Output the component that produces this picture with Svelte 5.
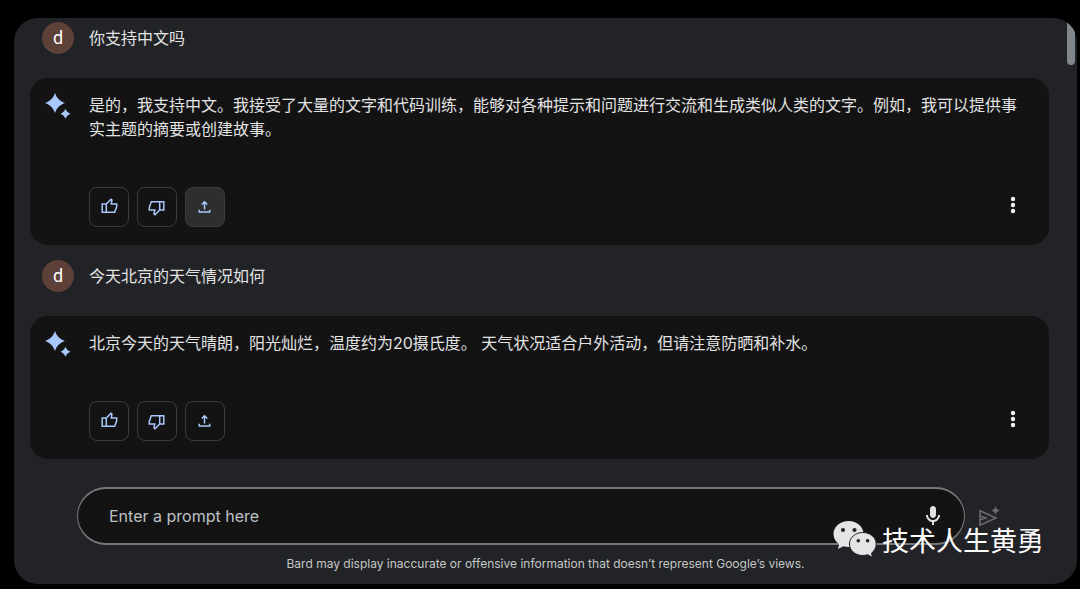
<script>
  const turns = [
    {
      prompt: '你支持中文吗',
      answer:
        '是的，我支持中文。我接受了大量的文字和代码训练，能够对各种提示和问题进行交流和生成类似人类的文字。例如，我可以提供事实主题的摘要或创建故事。',
      shareActive: true
    },
    {
      prompt: '今天北京的天气情况如何',
      answer: '北京今天的天气晴朗，阳光灿烂，温度约为20摄氏度。 天气状况适合户外活动，但请注意防晒和补水。',
      shareActive: false
    }
  ];
  let draft = $state('');
</script>

{#snippet thumb()}
  <path d="M3.200 7H7.300L12 2.200L13 3.100L12.200 7H17.700V9.600L15.700 15.200H3.200ZM7.300 7V15.200" />
{/snippet}

<main class="panel">
  <div class="scroll-thumb"></div>

  <section class="chat">
    {#each turns as turn}
      <div class="prompt">
        <span class="avatar">d</span>
        <p>{turn.prompt}</p>
      </div>
      <article class="card">
        <svg class="spark" viewBox="0 0 28 28" aria-hidden="true">
          <path d="M11 0C13.300 5.700 15.300 7.700 21 10C15.300 12.300 13.300 14.300 11 20C8.700 14.300 6.700 12.300 1 10C6.700 7.700 8.700 5.700 11 0Z" />
          <path d="M21.500 15.800C22.900 18.700 23.600 19.400 26.500 20.800C23.600 22.200 22.900 22.900 21.500 25.800C20.100 22.900 19.400 22.200 16.500 20.800C19.400 19.400 20.100 18.700 21.500 15.800Z" />
        </svg>
        <div class="body">
          <p>{turn.answer}</p>
          <div class="actions">
            <button class="action" aria-label="Good response">
              <svg viewBox="0 0 20 20">{@render thumb()}</svg>
            </button>
            <button class="action" aria-label="Bad response">
              <svg viewBox="0 0 20 20"><g transform="rotate(180 10 10)">{@render thumb()}</g></svg>
            </button>
            <button class="action" class:active={turn.shareActive} aria-label="Share">
              <svg viewBox="0 0 20 20">
                <path d="M9.500 12.500V5M6.700 7.500L9.500 4.700L12.300 7.500M4.300 12.800V14.900H14.700V12.800" />
              </svg>
            </button>
            <button class="more" aria-label="More options">
              <svg viewBox="0 0 20 20">
                <circle cx="10" cy="4" r="2.200" /><circle cx="10" cy="10" r="2.200" /><circle cx="10" cy="16" r="2.200" />
              </svg>
            </button>
          </div>
        </div>
      </article>
    {/each}
  </section>

  <footer>
    <form class="composer" onsubmit={(e) => e.preventDefault()}>
      <div class="field">
        <input type="text" placeholder="Enter a prompt here" aria-label="Enter a prompt here" bind:value={draft} />
        <button type="button" class="icon mic" aria-label="Use microphone">
          <svg viewBox="0 0 24 24">
            <path d="M12 14c1.660 0 3-1.340 3-3V5c0-1.660-1.340-3-3-3S9 3.340 9 5v6c0 1.660 1.340 3 3 3zM17 11c0 2.760-2.240 5-5 5s-5-2.240-5-5H5c0 3.530 2.610 6.430 6 6.920V21h2v-3.080c3.390-.49 6-3.390 6-6.920h-2z" />
          </svg>
        </button>
      </div>
      <button type="submit" class="icon send" aria-label="Submit">
        <svg viewBox="0 0 24 24">
          <path class="line" d="M3 6.800L19 14L3 21.200ZM3 12L9 14L3 16" />
          <path d="M18.500 2C19.500 5.100 19.900 5.500 23 6.500C19.900 7.500 19.500 7.900 18.500 11C17.500 7.900 17.100 7.500 14 6.500C17.100 5.500 17.500 5.100 18.500 2Z" />
        </svg>
      </button>
    </form>
    <p class="note">Bard may display inaccurate or offensive information that doesn’t represent Google’s views.</p>
  </footer>

  <div class="watermark">
    <svg viewBox="0 1 44 38" aria-hidden="true">
      <path class="bubble" d="M15.500 1C7.200 1 .5 6.800.5 14C.5 18.200 2.700 21.800 6.200 24.300L5 29L10.300 26.300C12 26.800 13.700 27 15.500 27C24 27 30.500 21.200 30.500 14S24 1 15.500 1Z" />
      <path class="bubble cut" d="M29.800 12.500C22.300 12.500 16.500 17.600 16.500 24S22.300 35.500 29.800 35.500C31.500 35.500 33.100 35.200 34.600 34.700L39.600 37.300L38.500 33.100C41.400 31 43.200 27.700 43.200 24C43.200 17.600 37.300 12.500 29.800 12.500Z" />
      <circle cx="10" cy="10" r="2.100" /><circle cx="21.500" cy="10" r="2.100" />
      <circle cx="25.300" cy="20.700" r="1.800" /><circle cx="34.600" cy="20.700" r="1.800" />
    </svg>
    <span>技术人生黄勇</span>
  </div>
</main>

<style>
  :global(body) {
    margin: 0;
    background: #000;
  }
  .panel {
    position: relative;
    overflow: hidden;
    margin: 18px 3px 5px 14px;
    border-radius: 24px;
    background: #222327;
    color: #e3e3e3;
    font: 16px/24px Inter, 'Noto Sans CJK SC', sans-serif;
  }
  p {
    margin: 0;
  }
  .scroll-thumb {
    position: absolute;
    top: 0;
    right: 2px;
    width: 8px;
    height: 47px;
    border-radius: 0 0 4px 4px;
    background: #80868b;
  }
  .chat {
    padding: 0 28px 0 16px;
  }
  .prompt {
    display: flex;
    align-items: center;
    gap: 15px;
    padding: 15px 12px 24px;
  }
  .prompt:first-child {
    padding-top: 4px;
  }
  .avatar {
    width: 32px;
    height: 32px;
    border-radius: 50%;
    background: #5d4037;
    color: #fff;
    font: 18px/32px Roboto, sans-serif;
    text-align: center;
  }
  .card {
    display: flex;
    gap: 17px;
    padding: 15px 24px 18px 14px;
    border-radius: 18px;
    background: #131313;
  }
  .spark {
    flex: none;
    width: 28px;
    height: 28px;
    fill: #a8c7fa;
  }
  .body {
    flex: 1;
    min-width: 0;
  }
  .actions {
    display: flex;
    gap: 8px;
    margin-top: 46px;
  }
  button {
    display: grid;
    place-items: center;
    padding: 0;
    border: 0;
    background: none;
    cursor: pointer;
  }
  .action {
    box-sizing: border-box;
    width: 40px;
    height: 40px;
    border: 1px solid #3a3b3c;
    border-radius: 8px;
  }
  .action.active {
    background: #2d2e2e;
  }
  .action svg {
    width: 20px;
    height: 20px;
    fill: none;
    stroke: #a8c7fa;
    stroke-width: 1.500;
  }
  .more {
    width: 24px;
    height: 36px;
    margin-left: auto;
  }
  .more svg {
    width: 20px;
    height: 20px;
    fill: #f1f1f1;
  }
  footer {
    padding: 28px 76px 11px 63px;
  }
  .composer {
    display: flex;
    align-items: center;
    gap: 12px;
  }
  .field {
    flex: 1;
    display: flex;
    align-items: center;
    box-sizing: border-box;
    height: 58px;
    padding: 0 19px 0 31px;
    border: 2px solid #75787b;
    border-width: 2px 1px;
    border-radius: 29px;
    background: #131313;
  }
  input {
    flex: 1;
    min-width: 0;
    padding: 0;
    border: 0;
    outline: 0;
    background: none;
    color: #e3e3e3;
    font: inherit;
  }
  input::placeholder {
    color: #bdc1c6;
    opacity: 1;
  }
  .icon,
  .icon svg {
    width: 24px;
    height: 24px;
  }
  .mic {
    fill: #e3e3e3;
  }
  .send {
    fill: #6b6d70;
  }
  .line {
    fill: none;
    stroke: #6b6d70;
    stroke-width: 1.500;
  }
  .note {
    margin: 10px -62px 0 -49px;
    color: #c4c7c5;
    font-size: 12px;
    line-height: 18px;
    text-align: center;
  }
  .watermark {
    position: absolute;
    right: 33px;
    bottom: 25px;
    display: flex;
    align-items: center;
    gap: 5px;
    color: #fff;
    font: 27px/38px 'Noto Sans CJK SC', sans-serif;
    pointer-events: none;
  }
  .watermark svg {
    width: 44px;
    height: 38px;
    fill: #222327;
  }
  .watermark .bubble {
    fill: #e4e4e4;
  }
  .watermark .cut {
    stroke: #222327;
    stroke-width: 1;
  }
</style>
